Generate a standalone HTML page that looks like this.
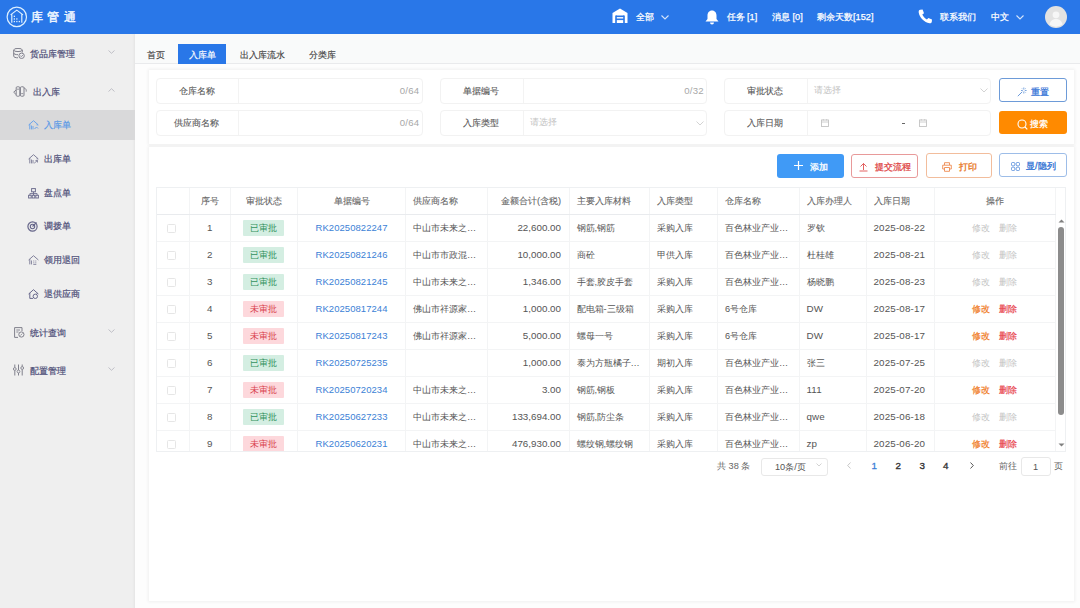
<!DOCTYPE html>
<html><head><meta charset="utf-8">
<style>
*{box-sizing:border-box;margin:0;padding:0}
html,body{width:1080px;height:608px;overflow:hidden;background:#fbfbfb;font-family:"Liberation Sans",sans-serif;color:#555;font-size:9px}
.abs{position:absolute}
#hdr{position:absolute;left:0;top:0;width:1080px;height:33.5px;background:#2977e8;box-shadow:0 1px 1px rgba(20,60,140,.35)}
#hdr .t{position:absolute;color:#fff;font-size:9.2px;line-height:12px;white-space:nowrap;-webkit-text-stroke:0.25px #fff}
#side{position:absolute;left:0;top:33.5px;width:135px;height:575px;background:#efefef;box-shadow:inset -3px 0 3px -2px rgba(0,0,0,.05)}
.mi{position:absolute;left:0;width:135px;color:#4e4e78;font-size:9.2px;line-height:12px;white-space:nowrap;-webkit-text-stroke:0.2px currentColor}
.mi .tx{position:absolute}
.mi svg{position:absolute}
#main{position:absolute;left:135px;top:33.5px;width:945px;height:575px;background:#fdfdfd}
#tabs{position:absolute;left:135px;top:33.5px;width:945px;height:30.5px;background:#f9fafa;border-bottom:1px solid #e9eaec}
.tab{position:absolute;top:10.5px;height:19.5px;line-height:22px;font-size:9.2px;color:#444;white-space:nowrap;-webkit-text-stroke:0.15px currentColor}
.card{position:absolute;background:#fff;box-shadow:0 0 3px 1px rgba(0,0,0,.055)}
.grp{position:absolute;height:26px;border:1px solid #f2f2f2;border-radius:4px;background:#fff}
.grp .lb{position:absolute;left:0;top:0;width:82.5px;padding-right:1.5px;height:24px;line-height:24px;text-align:center;border-right:1px solid #f3f3f3;color:#5a5a5a;font-size:9.2px;-webkit-text-stroke:0.12px currentColor}
.grp .cnt{position:absolute;right:2px;top:0;line-height:24px;color:#a8a8a8;font-size:9.6px;letter-spacing:0.3px}
.grp .ph{position:absolute;left:88.5px;top:-0.8px;line-height:24px;color:#c4c4c4;font-size:9px}
.btn{position:absolute;height:24px;border-radius:3px;font-size:9.2px;line-height:22px;text-align:center;white-space:nowrap}
table{border-collapse:collapse;table-layout:fixed}
#tbl{position:absolute;left:155.5px;top:186.5px;width:910.5px;height:265px;overflow:hidden;border:1px solid #eef0f3}
.cell{position:absolute;white-space:nowrap;font-size:9.2px;line-height:12px}
.hl{position:absolute;background:#f3f4f5}
.th{color:#666;-webkit-text-stroke:0.1px currentColor}
.tag{position:absolute;width:41.5px;height:16px;line-height:16px;text-align:center;font-size:9.2px;border-radius:1px}
.ok{background:#d4eee2;color:#33925e}
.no{background:#fdd8dc;color:#d9434f}
.cb{position:absolute;width:9px;height:9.5px;border:1px solid #e6e6e6;border-radius:1.5px;background:#fff}
.lk{color:#3d7fd6}
.n{font-size:9.8px;letter-spacing:0.15px}
.op1{color:#f07a1e;-webkit-text-stroke:0.2px currentColor}
.op2{color:#e8434d;-webkit-text-stroke:0.2px currentColor}
.dis{color:#c4c4c4}
</style></head>
<body>
<div id="hdr">
  <svg class="abs" style="left:0;top:0" width="34" height="34" viewBox="0 0 34 34">
    <circle cx="16.8" cy="16.9" r="9.7" fill="none" stroke="#dcefff" stroke-width="1.2"/>
    <path d="M10.6 14.9 L16.8 10.1 L23 14.9 M11.8 14 V22.8 M21.8 14 V22.8" fill="none" stroke="#dcefff" stroke-width="1.2" stroke-linejoin="round"/>
    <g fill="#dcefff"><rect x="13.7" y="15.7" width="1.3" height="1.3"/><rect x="13.7" y="18.3" width="1.3" height="1.3"/><rect x="16.2" y="18.3" width="1.3" height="1.3"/><rect x="13.7" y="20.9" width="1.3" height="1.3"/><rect x="16.2" y="20.9" width="1.3" height="1.3"/><rect x="18.7" y="20.9" width="1.3" height="1.3"/></g>
  </svg>
  <div class="t" style="left:30.5px;top:9.7px;font-size:12.2px;line-height:14px;letter-spacing:4.9px;color:#eef6ff;-webkit-text-stroke:0.45px #eef6ff">库管通</div>
  <!-- house -->
  <svg class="abs" style="left:612px;top:8px" width="16" height="15" viewBox="0 0 16 15">
    <path d="M8 0.5 L15.5 5 V15 H0.5 V5 Z" fill="#fff"/>
    <rect x="4" y="7.5" width="8" height="1.6" fill="#2977e8"/>
    <rect x="4" y="10.5" width="8" height="1.6" fill="#2977e8"/>
    <rect x="3.2" y="7.5" width="1.6" height="7.5" fill="#2977e8"/>
    <rect x="11.2" y="7.5" width="1.6" height="7.5" fill="#2977e8"/>
  </svg>
  <div class="t" style="left:636px;top:11px">全部</div>
  <svg class="abs" style="left:661px;top:14.5px" width="8" height="5" viewBox="0 0 8 5"><path d="M0.5 0.5 L4 4 L7.5 0.5" fill="none" stroke="rgba(255,255,255,.8)" stroke-width="1.1"/></svg>
  <!-- bell -->
  <svg class="abs" style="left:704.5px;top:9.5px" width="14" height="15" viewBox="0 0 14 15">
    <path d="M7 0.5 C4 0.5 2.5 3 2.5 5.5 V9 L0.5 11.5 H13.5 L11.5 9 V5.5 C11.5 3 10 0.5 7 0.5 Z" fill="#fff"/>
    <path d="M5 12.5 A2 2 0 0 0 9 12.5 Z" fill="#fff"/>
  </svg>
  <div class="t" style="left:726.5px;top:11px">任务 [1]</div>
  <div class="t" style="left:772px;top:11px">消息 [0]</div>
  <div class="t" style="left:817px;top:11px">剩余天数[152]</div>
  <!-- phone -->
  <svg class="abs" style="left:918px;top:9px" width="15" height="15" viewBox="0 0 15 15">
    <path d="M2.2 0.8 L4.6 0.5 L6 4.2 L4.3 5.6 C5 7.4 6.8 9.4 8.9 10.5 L10.4 8.9 L14 10.4 L13.8 12.8 C13.5 14 12.6 14.5 11.5 14.3 C6.3 13.2 1.6 8.6 0.7 3.4 C0.5 2 1.1 1 2.2 0.8 Z" fill="#fff"/>
  </svg>
  <div class="t" style="left:940px;top:11px">联系我们</div>
  <div class="t" style="left:991px;top:11px">中文</div>
  <svg class="abs" style="left:1016px;top:14.5px" width="8" height="5" viewBox="0 0 8 5"><path d="M0.5 0.5 L4 4 L7.5 0.5" fill="none" stroke="rgba(255,255,255,.8)" stroke-width="1.1"/></svg>
  <svg class="abs" style="left:1044.5px;top:6px" width="22" height="22" viewBox="0 0 22 22">
    <circle cx="11" cy="11" r="11" fill="#e2e2e2"/>
    <circle cx="11" cy="8.8" r="3.4" fill="#f6f6f6"/>
    <path d="M4.5 18.5 C5.5 14.5 8 13 11 13 C14 13 16.5 14.5 17.5 18.5 A11 11 0 0 1 4.5 18.5 Z" fill="#f6f6f6"/>
  </svg>
</div>

<div id="side">
  <div class="abs" style="left:0;top:76px;width:135px;height:30px;background:#d9d9da"></div>
</div>
<!-- sidebar items (absolute to page) -->
<svg class="abs" style="left:12.5px;top:47.5px" width="12" height="11" viewBox="0 0 12 11">
  <ellipse cx="5" cy="2" rx="4.3" ry="1.6" fill="none" stroke="#80808c" stroke-width="1"/>
  <path d="M0.7 2 V8.2 C0.7 9.2 2.6 9.8 5 9.8 M9.3 2 V4.5 M0.7 5.1 C0.7 6 2.6 6.7 5 6.7" fill="none" stroke="#80808c" stroke-width="1"/>
  <circle cx="8.6" cy="7.8" r="2.7" fill="#efeff1" stroke="#80808c" stroke-width="1"/>
  <path d="M7.4 7.8 L8.3 8.7 L9.9 7" fill="none" stroke="#80808c" stroke-width="0.9"/>
</svg>
<div class="mi" style="top:48px"><span class="tx" style="left:30px">货品库管理</span></div>
<svg class="abs" style="left:108px;top:49.5px" width="7" height="4" viewBox="0 0 7 4"><path d="M0.5 0.5 L3.5 3.3 L6.5 0.5" fill="none" stroke="#b4b4bc" stroke-width="0.8"/></svg>

<svg class="abs" style="left:13px;top:85.5px" width="14" height="11" viewBox="0 0 14 11">
  <rect x="3.2" y="0.8" width="3.6" height="9.4" rx="1" fill="none" stroke="#80808c" stroke-width="1"/>
  <rect x="7.4" y="0.8" width="3.6" height="9.4" rx="1" fill="none" stroke="#80808c" stroke-width="1"/>
  <path d="M3 4 L0.7 6.2 L3 8.4 M11.2 2 C12.8 2.5 13.5 3.8 13.2 5.6" fill="none" stroke="#80808c" stroke-width="1"/>
  <path d="M4 3.2 H6 M8.2 7.6 H10.2" stroke="#80808c" stroke-width="0.8"/>
</svg>
<div class="mi" style="top:86px"><span class="tx" style="left:33px">出入库</span></div>
<svg class="abs" style="left:108px;top:88px" width="7" height="4" viewBox="0 0 7 4"><path d="M0.5 3.5 L3.5 0.7 L6.5 3.5" fill="none" stroke="#b4b4bc" stroke-width="0.8"/></svg>

<svg class="abs" style="left:27.5px;top:120px" width="11" height="10" viewBox="0 0 11 10">
  <path d="M0.6 5 L5.5 0.7 L10.4 5 M1.8 4 V9.4 M9.2 4 V5.5" fill="none" stroke="#6aa3ea" stroke-width="1"/>
  <path d="M3.5 5.5 V9.4 M5 6 V9.4" fill="none" stroke="#6aa3ea" stroke-width="0.9"/>
  <path d="M6.5 9 L8.5 7 L10 8.5" fill="none" stroke="#6aa3ea" stroke-width="1"/>
</svg>
<div class="mi" style="top:119px;color:#5b9ae6"><span class="tx" style="left:44px">入库单</span></div>

<svg class="abs" style="left:27.5px;top:154px" width="11" height="10" viewBox="0 0 11 10">
  <path d="M0.6 5 L5.5 0.7 L10.4 5 M1.8 4 V9.4 M9.2 4 V5.5" fill="none" stroke="#80809a" stroke-width="1"/>
  <path d="M3.5 5.5 V9.4 M5 6 V9.4" fill="none" stroke="#80809a" stroke-width="0.9"/>
  <path d="M6.2 9.2 L9.5 6.5 M7.5 6.5 H9.5 V8.5" fill="none" stroke="#80809a" stroke-width="0.9"/>
</svg>
<div class="mi" style="top:153px"><span class="tx" style="left:44px">出库单</span></div>

<svg class="abs" style="left:27.5px;top:187.5px" width="11" height="11" viewBox="0 0 11 11">
  <rect x="3.6" y="0.6" width="3.8" height="3.2" fill="none" stroke="#6a6a8c" stroke-width="0.95"/>
  <path d="M5.5 3.8 V5.6 M1.9 7.1 V5.6 H9.1 V7.1 M5.5 5.6 V7.1" fill="none" stroke="#6a6a8c" stroke-width="0.9"/>
  <rect x="0.6" y="7.3" width="2.6" height="2.7" fill="none" stroke="#6a6a8c" stroke-width="0.95"/>
  <rect x="4.2" y="7.3" width="2.6" height="2.7" fill="none" stroke="#6a6a8c" stroke-width="0.95"/>
  <rect x="7.8" y="7.3" width="2.6" height="2.7" fill="none" stroke="#6a6a8c" stroke-width="0.95"/>
</svg>
<div class="mi" style="top:187px"><span class="tx" style="left:44px">盘点单</span></div>

<svg class="abs" style="left:27px;top:220.5px" width="11" height="11" viewBox="0 0 11 11">
  <circle cx="5.5" cy="5.5" r="4.6" fill="none" stroke="#66668a" stroke-width="1.2"/>
  <circle cx="5.5" cy="5.5" r="2.2" fill="none" stroke="#66668a" stroke-width="1.1"/>
  <path d="M5.5 5.5 L9.5 1.5" stroke="#66668a" stroke-width="1.1"/>
</svg>
<div class="mi" style="top:220px"><span class="tx" style="left:43.8px">调拨单</span></div>

<svg class="abs" style="left:28px;top:254.5px" width="11" height="10" viewBox="0 0 11 10">
  <path d="M0.6 5 L5.5 0.7 L10.4 5 M1.8 4 V9.4" fill="none" stroke="#80809a" stroke-width="1"/>
  <path d="M3.5 5.5 V9.4 M5.3 6 h1 M5.3 7.8 h1 M7.3 6 h1 M7.3 7.8 h1 M5.3 9.4 h3" fill="none" stroke="#80809a" stroke-width="0.9"/>
</svg>
<div class="mi" style="top:254px"><span class="tx" style="left:43.8px">领用退回</span></div>

<svg class="abs" style="left:28px;top:288.5px" width="11" height="10" viewBox="0 0 11 10">
  <path d="M0.6 5 L5.5 0.7 L10.4 5 M1.8 4 V9.4 H5 M9.2 4 V5" fill="none" stroke="#66668a" stroke-width="1"/>
  <circle cx="7.3" cy="7.3" r="2.2" fill="none" stroke="#66668a" stroke-width="1"/>
</svg>
<div class="mi" style="top:288px"><span class="tx" style="left:43.8px">退供应商</span></div>

<svg class="abs" style="left:13.5px;top:326.5px" width="11" height="11" viewBox="0 0 11 11">
  <path d="M8 4 V0.6 H0.6 V10.4 H4" fill="none" stroke="#80808c" stroke-width="1"/>
  <path d="M2.3 3 H6 M2.3 5 H4.5" stroke="#80808c" stroke-width="0.9"/>
  <circle cx="7.4" cy="7.5" r="2.6" fill="none" stroke="#80808c" stroke-width="1"/>
  <path d="M6.4 8.5 L8.4 6.5" stroke="#80808c" stroke-width="0.8"/>
</svg>
<div class="mi" style="top:326.5px"><span class="tx" style="left:30.3px">统计查询</span></div>
<svg class="abs" style="left:108px;top:328.5px" width="7" height="4" viewBox="0 0 7 4"><path d="M0.5 0.5 L3.5 3.3 L6.5 0.5" fill="none" stroke="#b4b4bc" stroke-width="0.8"/></svg>

<svg class="abs" style="left:13px;top:364px" width="11" height="12" viewBox="0 0 11 12">
  <path d="M1.8 0.5 V3.5 M1.8 6.5 V11.5 M5.5 0.5 V6 M5.5 9 V11.5 M9.2 0.5 V2.5 M9.2 5.5 V11.5" stroke="#80808c" stroke-width="1"/>
  <circle cx="1.8" cy="5" r="1.4" fill="none" stroke="#80808c" stroke-width="0.9"/>
  <circle cx="5.5" cy="7.5" r="1.4" fill="none" stroke="#80808c" stroke-width="0.9"/>
  <circle cx="9.2" cy="4" r="1.4" fill="none" stroke="#80808c" stroke-width="0.9"/>
</svg>
<div class="mi" style="top:364.5px"><span class="tx" style="left:30.3px">配置管理</span></div>
<svg class="abs" style="left:108px;top:366.5px" width="7" height="4" viewBox="0 0 7 4"><path d="M0.5 0.5 L3.5 3.3 L6.5 0.5" fill="none" stroke="#b4b4bc" stroke-width="0.8"/></svg>

<div id="main"></div>
<div id="tabs">
  <div class="tab" style="left:12px">首页</div>
  <div class="tab" style="left:43px;width:48px;background:#2977e8;color:#fff;text-align:center">入库单</div>
  <div class="tab" style="left:105px">出入库流水</div>
  <div class="tab" style="left:174px">分类库</div>
</div>

<div class="card" style="left:148.5px;top:69.5px;width:925px;height:74px"></div>
<div class="card" style="left:148.5px;top:146.5px;width:925px;height:454px"></div>


<div class="grp" style="left:155.5px;top:77.5px;width:267px"><div class="lb">仓库名称</div><div class="cnt">0/64</div></div>
<div class="grp" style="left:440px;top:77.5px;width:267px"><div class="lb">单据编号</div><div class="cnt">0/32</div></div>
<div class="grp" style="left:724px;top:77.5px;width:267px"><div class="lb">审批状态</div><div class="ph">请选择</div></div>
<svg class="abs" style="left:980px;top:88px" width="8" height="5" viewBox="0 0 8 5"><path d="M0.5 0.5 L4 4 L7.5 0.5" fill="none" stroke="#c8c8c8" stroke-width="0.8"/></svg>
<div class="grp" style="left:155.5px;top:110px;width:267px"><div class="lb">供应商名称</div><div class="cnt">0/64</div></div>
<div class="grp" style="left:440px;top:110px;width:267px"><div class="lb">入库类型</div><div class="ph">请选择</div></div>
<svg class="abs" style="left:695.5px;top:120.5px" width="8" height="5" viewBox="0 0 8 5"><path d="M0.5 0.5 L4 4 L7.5 0.5" fill="none" stroke="#c8c8c8" stroke-width="0.8"/></svg>
<div class="grp" style="left:724px;top:110px;width:267px"><div class="lb">入库日期</div></div>
<svg class="abs" style="left:821px;top:118.5px" width="8" height="8" viewBox="0 0 8 8"><rect x="0.5" y="1" width="7" height="6.5" fill="none" stroke="#c4c4c4" stroke-width="0.9"/><path d="M0.5 3 H7.5 M2.3 0 V1.5 M5.7 0 V1.5" stroke="#c4c4c4" stroke-width="0.8"/></svg><svg class="abs" style="left:919px;top:118.5px" width="8" height="8" viewBox="0 0 8 8"><rect x="0.5" y="1" width="7" height="6.5" fill="none" stroke="#c4c4c4" stroke-width="0.9"/><path d="M0.5 3 H7.5 M2.3 0 V1.5 M5.7 0 V1.5" stroke="#c4c4c4" stroke-width="0.8"/></svg>
<div class="abs" style="left:901.5px;top:122.5px;width:3px;height:1px;background:#666"></div>
<div class="btn" style="left:999px;top:78px;width:67.5px;border:1px solid #6d9bd8;color:#2e6fd6;background:#fff">
  <svg class="abs" style="left:17px;top:7.5px" width="10" height="10" viewBox="0 0 10 10">
    <path d="M0.8 9.2 L5.2 4.8" stroke="#5a8fd6" stroke-width="0.9"/>
    <path d="M6.8 0.5 V2.5 M6.8 4.5 V6.5 M4 3.5 H5.8 M7.8 3.5 H9.6 M5 1.5 L5.7 2.2 M8.6 1.5 L7.9 2.2 M8.6 5.5 L7.9 4.8" stroke="#5a8fd6" stroke-width="0.8"/>
  </svg>
  <span class="abs" style="left:31px;top:1.5px;-webkit-text-stroke:0.2px #2e6fd6">重置</span>
</div>
<div class="btn" style="left:999px;top:110.5px;width:67.5px;height:23.5px;background:#ff8a00;color:#fff">
  <svg class="abs" style="left:17.5px;top:8px" width="11" height="11" viewBox="0 0 11 11">
    <circle cx="5" cy="5" r="4" fill="none" stroke="#fff" stroke-width="1.1"/>
    <path d="M8 8 L10.3 10.3" stroke="#fff" stroke-width="1.1"/>
  </svg>
  <span class="abs" style="left:31px;top:2px;-webkit-text-stroke:0.25px #fff">搜索</span>
</div>

<!--TABLE-->
<div class="btn" style="left:776.5px;top:153.5px;width:67px;height:24px;background:#409af6;color:#fff;line-height:24px">
  <svg class="abs" style="left:17px;top:7.5px" width="9" height="9" viewBox="0 0 9 9"><path d="M4.5 0 V9 M0 4.5 H9" stroke="#fff" stroke-width="1.2"/></svg>
  <span class="abs" style="left:33.5px;top:1px;-webkit-text-stroke:0.3px #fff">添加</span>
</div>
<div class="btn" style="left:850.5px;top:153.5px;width:67.5px;height:24px;border:1px solid #e89a9a;color:#e04a4a;background:#fff">
  <svg class="abs" style="left:7.5px;top:7.5px" width="9" height="10" viewBox="0 0 9 10"><path d="M4.5 1.5 V8 M1.5 4.5 L4.5 1.5 L7.5 4.5 M0.5 9 H8.5" fill="none" stroke="#e05050" stroke-width="0.9"/></svg>
  <span class="abs" style="left:23px;top:1.5px;-webkit-text-stroke:0.3px #e04a4a">提交流程</span>
</div>
<div class="btn" style="left:925.5px;top:153px;width:66.5px;height:24.5px;border:1px solid #f2bd9c;color:#e8761e;background:#fff">
  <svg class="abs" style="left:15px;top:7.5px" width="10" height="10" viewBox="0 0 10 10"><path d="M2.5 3 V0.7 H7.5 V3 M2.5 7 H0.7 V3.2 H9.3 V7 H7.5 M2.5 5.5 H7.5 V9.3 H2.5 Z" fill="none" stroke="#ee8a50" stroke-width="0.9"/></svg>
  <span class="abs" style="left:32px;top:1.5px;-webkit-text-stroke:0.3px #e8761e">打印</span>
</div>
<div class="btn" style="left:999px;top:152.5px;width:67.5px;height:24px;border:1px solid #9dbde8;color:#3474d4;background:#fff">
  <svg class="abs" style="left:10.5px;top:8px" width="9" height="9" viewBox="0 0 9 9"><g fill="none" stroke="#5a90dd" stroke-width="0.9"><rect x="0.5" y="0.5" width="3.3" height="3.3" rx="1"/><rect x="5.2" y="0.5" width="3.3" height="3.3" rx="1"/><rect x="0.5" y="5.2" width="3.3" height="3.3" rx="1"/><rect x="5.2" y="5.2" width="3.3" height="3.3" rx="1"/></g></svg>
  <span class="abs" style="left:26px;top:1.5px;-webkit-text-stroke:0.3px #3474d4">显/隐列</span>
</div>
<div class="abs" style="left:155.5px;top:186.5px;width:910.5px;height:265.0px;border:1px solid #eef0f2;overflow:hidden;background:#fff">
<div class="hl" style="left:32.5px;top:0;width:1px;height:265.0px"></div>
<div class="hl" style="left:73.0px;top:0;width:1px;height:265.0px"></div>
<div class="hl" style="left:140.5px;top:0;width:1px;height:265.0px"></div>
<div class="hl" style="left:248.5px;top:0;width:1px;height:265.0px"></div>
<div class="hl" style="left:330.0px;top:0;width:1px;height:265.0px"></div>
<div class="hl" style="left:412.0px;top:0;width:1px;height:265.0px"></div>
<div class="hl" style="left:492.5px;top:0;width:1px;height:265.0px"></div>
<div class="hl" style="left:560.5px;top:0;width:1px;height:265.0px"></div>
<div class="hl" style="left:642.0px;top:0;width:1px;height:265.0px"></div>
<div class="hl" style="left:709.0px;top:0;width:1px;height:265.0px"></div>
<div class="hl" style="left:777.0px;top:0;width:1px;height:265.0px"></div>
<div class="hl" style="left:898.5px;top:0;width:1px;height:265.0px"></div>
<div class="hl" style="left:0;top:26.0px;width:900.0px;height:1px;background:#e9ebee"></div>
<div class="hl" style="left:0;top:53.0px;width:900.0px;height:1px"></div>
<div class="hl" style="left:0;top:80.0px;width:900.0px;height:1px"></div>
<div class="hl" style="left:0;top:107.0px;width:900.0px;height:1px"></div>
<div class="hl" style="left:0;top:134.0px;width:900.0px;height:1px"></div>
<div class="hl" style="left:0;top:161.0px;width:900.0px;height:1px"></div>
<div class="hl" style="left:0;top:188.0px;width:900.0px;height:1px"></div>
<div class="hl" style="left:0;top:215.0px;width:900.0px;height:1px"></div>
<div class="hl" style="left:0;top:242.0px;width:900.0px;height:1px"></div>
<div class="hl" style="left:0;top:269.0px;width:900.0px;height:1px"></div>
<div class="cell th" style="left:33.0px;width:40.5px;top:7.25px;text-align:center">序号</div>
<div class="cell th" style="left:73.5px;width:67.5px;top:7.25px;text-align:center">审批状态</div>
<div class="cell th" style="left:141.0px;width:108.0px;top:7.25px;text-align:center">单据编号</div>
<div class="cell th" style="left:256.5px;top:7.25px">供应商名称</div>
<div class="cell th" style="left:330.5px;width:74.0px;top:7.25px;text-align:right">金额合计(含税)</div>
<div class="cell th" style="left:420.0px;top:7.25px">主要入库材料</div>
<div class="cell th" style="left:500.5px;top:7.25px">入库类型</div>
<div class="cell th" style="left:568.5px;top:7.25px">仓库名称</div>
<div class="cell th" style="left:650.0px;top:7.25px">入库办理人</div>
<div class="cell th" style="left:717.0px;top:7.25px">入库日期</div>
<div class="cell th" style="left:777.5px;width:121.5px;top:7.25px;text-align:center">操作</div>
<div class="cb" style="left:10.5px;top:36.2px"></div>
<div class="cell n" style="left:33.0px;width:40.5px;top:34.2px;text-align:center">1</div>
<div class="tag ok" style="left:86.3px;top:32.0px">已审批</div>
<div class="cell lk n" style="left:141.0px;width:108.0px;top:34.2px;text-align:center;font-size:9.5px;letter-spacing:0.05px">RK20250822247</div>
<div class="cell " style="left:256.5px;top:34.2px">中山市未来之…</div>
<div class="cell n" style="left:330.5px;width:74.0px;top:34.2px;text-align:right;letter-spacing:0">22,600.00</div>
<div class="cell " style="left:420.0px;top:34.2px">钢筋,钢筋</div>
<div class="cell " style="left:500.5px;top:34.2px">采购入库</div>
<div class="cell " style="left:568.5px;top:34.2px">百色林业产业…</div>
<div class="cell " style="left:650.0px;top:34.2px">罗钦</div>
<div class="cell n" style="left:717.0px;top:34.2px">2025-08-22</div>
<div class="cell dis" style="left:815.5px;top:34.2px">修改</div><div class="cell dis" style="left:842.5px;top:34.2px">删除</div>
<div class="cb" style="left:10.5px;top:63.2px"></div>
<div class="cell n" style="left:33.0px;width:40.5px;top:61.2px;text-align:center">2</div>
<div class="tag ok" style="left:86.3px;top:59.0px">已审批</div>
<div class="cell lk n" style="left:141.0px;width:108.0px;top:61.2px;text-align:center;font-size:9.5px;letter-spacing:0.05px">RK20250821246</div>
<div class="cell " style="left:256.5px;top:61.2px">中山市市政混…</div>
<div class="cell n" style="left:330.5px;width:74.0px;top:61.2px;text-align:right;letter-spacing:0">10,000.00</div>
<div class="cell " style="left:420.0px;top:61.2px">商砼</div>
<div class="cell " style="left:500.5px;top:61.2px">甲供入库</div>
<div class="cell " style="left:568.5px;top:61.2px">百色林业产业…</div>
<div class="cell " style="left:650.0px;top:61.2px">杜桂雄</div>
<div class="cell n" style="left:717.0px;top:61.2px">2025-08-21</div>
<div class="cell dis" style="left:815.5px;top:61.2px">修改</div><div class="cell dis" style="left:842.5px;top:61.2px">删除</div>
<div class="cb" style="left:10.5px;top:90.2px"></div>
<div class="cell n" style="left:33.0px;width:40.5px;top:88.2px;text-align:center">3</div>
<div class="tag ok" style="left:86.3px;top:86.0px">已审批</div>
<div class="cell lk n" style="left:141.0px;width:108.0px;top:88.2px;text-align:center;font-size:9.5px;letter-spacing:0.05px">RK20250821245</div>
<div class="cell " style="left:256.5px;top:88.2px">中山市未来之…</div>
<div class="cell n" style="left:330.5px;width:74.0px;top:88.2px;text-align:right;letter-spacing:0">1,346.00</div>
<div class="cell " style="left:420.0px;top:88.2px">手套,胶皮手套</div>
<div class="cell " style="left:500.5px;top:88.2px">采购入库</div>
<div class="cell " style="left:568.5px;top:88.2px">百色林业产业…</div>
<div class="cell " style="left:650.0px;top:88.2px">杨晓鹏</div>
<div class="cell n" style="left:717.0px;top:88.2px">2025-08-23</div>
<div class="cell dis" style="left:815.5px;top:88.2px">修改</div><div class="cell dis" style="left:842.5px;top:88.2px">删除</div>
<div class="cb" style="left:10.5px;top:117.2px"></div>
<div class="cell n" style="left:33.0px;width:40.5px;top:115.2px;text-align:center">4</div>
<div class="tag no" style="left:86.3px;top:113.0px">未审批</div>
<div class="cell lk n" style="left:141.0px;width:108.0px;top:115.2px;text-align:center;font-size:9.5px;letter-spacing:0.05px">RK20250817244</div>
<div class="cell " style="left:256.5px;top:115.2px">佛山市祥源家…</div>
<div class="cell n" style="left:330.5px;width:74.0px;top:115.2px;text-align:right;letter-spacing:0">1,000.00</div>
<div class="cell " style="left:420.0px;top:115.2px">配电箱-三级箱</div>
<div class="cell " style="left:500.5px;top:115.2px">采购入库</div>
<div class="cell " style="left:568.5px;top:115.2px">6号仓库</div>
<div class="cell n" style="left:650.0px;top:115.2px">DW</div>
<div class="cell n" style="left:717.0px;top:115.2px">2025-08-17</div>
<div class="cell op1" style="left:815.5px;top:115.2px">修改</div><div class="cell op2" style="left:842.5px;top:115.2px">删除</div>
<div class="cb" style="left:10.5px;top:144.2px"></div>
<div class="cell n" style="left:33.0px;width:40.5px;top:142.2px;text-align:center">5</div>
<div class="tag no" style="left:86.3px;top:140.0px">未审批</div>
<div class="cell lk n" style="left:141.0px;width:108.0px;top:142.2px;text-align:center;font-size:9.5px;letter-spacing:0.05px">RK20250817243</div>
<div class="cell " style="left:256.5px;top:142.2px">佛山市祥源家…</div>
<div class="cell n" style="left:330.5px;width:74.0px;top:142.2px;text-align:right;letter-spacing:0">5,000.00</div>
<div class="cell " style="left:420.0px;top:142.2px">螺母一号</div>
<div class="cell " style="left:500.5px;top:142.2px">采购入库</div>
<div class="cell " style="left:568.5px;top:142.2px">6号仓库</div>
<div class="cell n" style="left:650.0px;top:142.2px">DW</div>
<div class="cell n" style="left:717.0px;top:142.2px">2025-08-17</div>
<div class="cell op1" style="left:815.5px;top:142.2px">修改</div><div class="cell op2" style="left:842.5px;top:142.2px">删除</div>
<div class="cb" style="left:10.5px;top:171.2px"></div>
<div class="cell n" style="left:33.0px;width:40.5px;top:169.2px;text-align:center">6</div>
<div class="tag ok" style="left:86.3px;top:167.0px">已审批</div>
<div class="cell lk n" style="left:141.0px;width:108.0px;top:169.2px;text-align:center;font-size:9.5px;letter-spacing:0.05px">RK20250725235</div>
<div class="cell " style="left:256.5px;top:169.2px"></div>
<div class="cell n" style="left:330.5px;width:74.0px;top:169.2px;text-align:right;letter-spacing:0">1,000.00</div>
<div class="cell " style="left:420.0px;top:169.2px">泰为方瓶橘子…</div>
<div class="cell " style="left:500.5px;top:169.2px">期初入库</div>
<div class="cell " style="left:568.5px;top:169.2px">百色林业产业…</div>
<div class="cell " style="left:650.0px;top:169.2px">张三</div>
<div class="cell n" style="left:717.0px;top:169.2px">2025-07-25</div>
<div class="cell dis" style="left:815.5px;top:169.2px">修改</div><div class="cell dis" style="left:842.5px;top:169.2px">删除</div>
<div class="cb" style="left:10.5px;top:198.2px"></div>
<div class="cell n" style="left:33.0px;width:40.5px;top:196.2px;text-align:center">7</div>
<div class="tag no" style="left:86.3px;top:194.0px">未审批</div>
<div class="cell lk n" style="left:141.0px;width:108.0px;top:196.2px;text-align:center;font-size:9.5px;letter-spacing:0.05px">RK20250720234</div>
<div class="cell " style="left:256.5px;top:196.2px">中山市未来之…</div>
<div class="cell n" style="left:330.5px;width:74.0px;top:196.2px;text-align:right;letter-spacing:0">3.00</div>
<div class="cell " style="left:420.0px;top:196.2px">钢筋,钢板</div>
<div class="cell " style="left:500.5px;top:196.2px">采购入库</div>
<div class="cell " style="left:568.5px;top:196.2px">百色林业产业…</div>
<div class="cell n" style="left:650.0px;top:196.2px">111</div>
<div class="cell n" style="left:717.0px;top:196.2px">2025-07-20</div>
<div class="cell op1" style="left:815.5px;top:196.2px">修改</div><div class="cell op2" style="left:842.5px;top:196.2px">删除</div>
<div class="cb" style="left:10.5px;top:225.2px"></div>
<div class="cell n" style="left:33.0px;width:40.5px;top:223.2px;text-align:center">8</div>
<div class="tag ok" style="left:86.3px;top:221.0px">已审批</div>
<div class="cell lk n" style="left:141.0px;width:108.0px;top:223.2px;text-align:center;font-size:9.5px;letter-spacing:0.05px">RK20250627233</div>
<div class="cell " style="left:256.5px;top:223.2px">中山市未来之…</div>
<div class="cell n" style="left:330.5px;width:74.0px;top:223.2px;text-align:right;letter-spacing:0">133,694.00</div>
<div class="cell " style="left:420.0px;top:223.2px">钢筋,防尘条</div>
<div class="cell " style="left:500.5px;top:223.2px">采购入库</div>
<div class="cell " style="left:568.5px;top:223.2px">百色林业产业…</div>
<div class="cell n" style="left:650.0px;top:223.2px">qwe</div>
<div class="cell n" style="left:717.0px;top:223.2px">2025-06-18</div>
<div class="cell dis" style="left:815.5px;top:223.2px">修改</div><div class="cell dis" style="left:842.5px;top:223.2px">删除</div>
<div class="cb" style="left:10.5px;top:252.2px"></div>
<div class="cell n" style="left:33.0px;width:40.5px;top:250.2px;text-align:center">9</div>
<div class="tag no" style="left:86.3px;top:248.0px">未审批</div>
<div class="cell lk n" style="left:141.0px;width:108.0px;top:250.2px;text-align:center;font-size:9.5px;letter-spacing:0.05px">RK20250620231</div>
<div class="cell " style="left:256.5px;top:250.2px">中山市未来之…</div>
<div class="cell n" style="left:330.5px;width:74.0px;top:250.2px;text-align:right;letter-spacing:0">476,930.00</div>
<div class="cell " style="left:420.0px;top:250.2px">螺纹钢,螺纹钢</div>
<div class="cell " style="left:500.5px;top:250.2px">采购入库</div>
<div class="cell " style="left:568.5px;top:250.2px">百色林业产业…</div>
<div class="cell n" style="left:650.0px;top:250.2px">zp</div>
<div class="cell n" style="left:717.0px;top:250.2px">2025-06-20</div>
<div class="cell op1" style="left:815.5px;top:250.2px">修改</div><div class="cell op2" style="left:842.5px;top:250.2px">删除</div>
<div class="abs" style="left:899.0px;top:26.5px;width:10px;height:237.5px;background:#fff"></div>
<svg class="abs" style="left:901.0px;top:31.0px" width="7" height="4" viewBox="0 0 7 4"><path d="M0.5 3.5 L3.5 0.5 L6.5 3.5Z" fill="#808080"/></svg>
<div class="abs" style="left:901.3px;top:39.0px;width:6px;height:188px;border-radius:3px;background:#8c8c8c"></div>
<svg class="abs" style="left:901.0px;top:255.0px" width="7" height="4" viewBox="0 0 7 4"><path d="M0.5 0.5 L3.5 3.5 L6.5 0.5Z" fill="#808080"/></svg>
</div>
<div class="cell" style="left:717px;top:460px;color:#666">共 38 条</div>
<div class="abs" style="left:761px;top:457.5px;width:67px;height:18.5px;border:1px solid #e8e8e8;border-radius:3px;background:#fff"></div>
<div class="cell" style="left:775px;top:460.5px;color:#555">10条/页</div>
<svg class="abs" style="left:816px;top:463px" width="6" height="4" viewBox="0 0 6 4"><path d="M0.5 0.5 L3 3 L5.5 0.5" fill="none" stroke="#c8c8c8" stroke-width="0.8"/></svg>
<svg class="abs" style="left:846.5px;top:462px" width="4" height="7" viewBox="0 0 4 7"><path d="M3.5 0.5 L0.7 3.5 L3.5 6.5" fill="none" stroke="#c0c0c0" stroke-width="0.9"/></svg>
<div class="cell n" style="left:871.5px;top:459.5px;color:#3d7fd6;-webkit-text-stroke:0.3px #3d7fd6">1</div>
<div class="cell n" style="left:895.5px;top:459.5px;color:#333;-webkit-text-stroke:0.35px #333">2</div>
<div class="cell n" style="left:919.5px;top:459.5px;color:#333;-webkit-text-stroke:0.35px #333">3</div>
<div class="cell n" style="left:943px;top:459.5px;color:#333;-webkit-text-stroke:0.35px #333">4</div>
<svg class="abs" style="left:970px;top:462px" width="4" height="7" viewBox="0 0 4 7"><path d="M0.5 0.5 L3.3 3.5 L0.5 6.5" fill="none" stroke="#444" stroke-width="0.9"/></svg>
<div class="cell" style="left:999px;top:460px;color:#666">前往</div>
<div class="abs" style="left:1021px;top:457px;width:29.5px;height:18.5px;border:1px solid #e8e8e8;border-radius:3px;background:#fff"></div>
<div class="cell" style="left:1033px;top:460.5px;color:#555">1</div>
<div class="cell" style="left:1054px;top:460px;color:#666">页</div>
<!--/TABLE-->
</body></html>
